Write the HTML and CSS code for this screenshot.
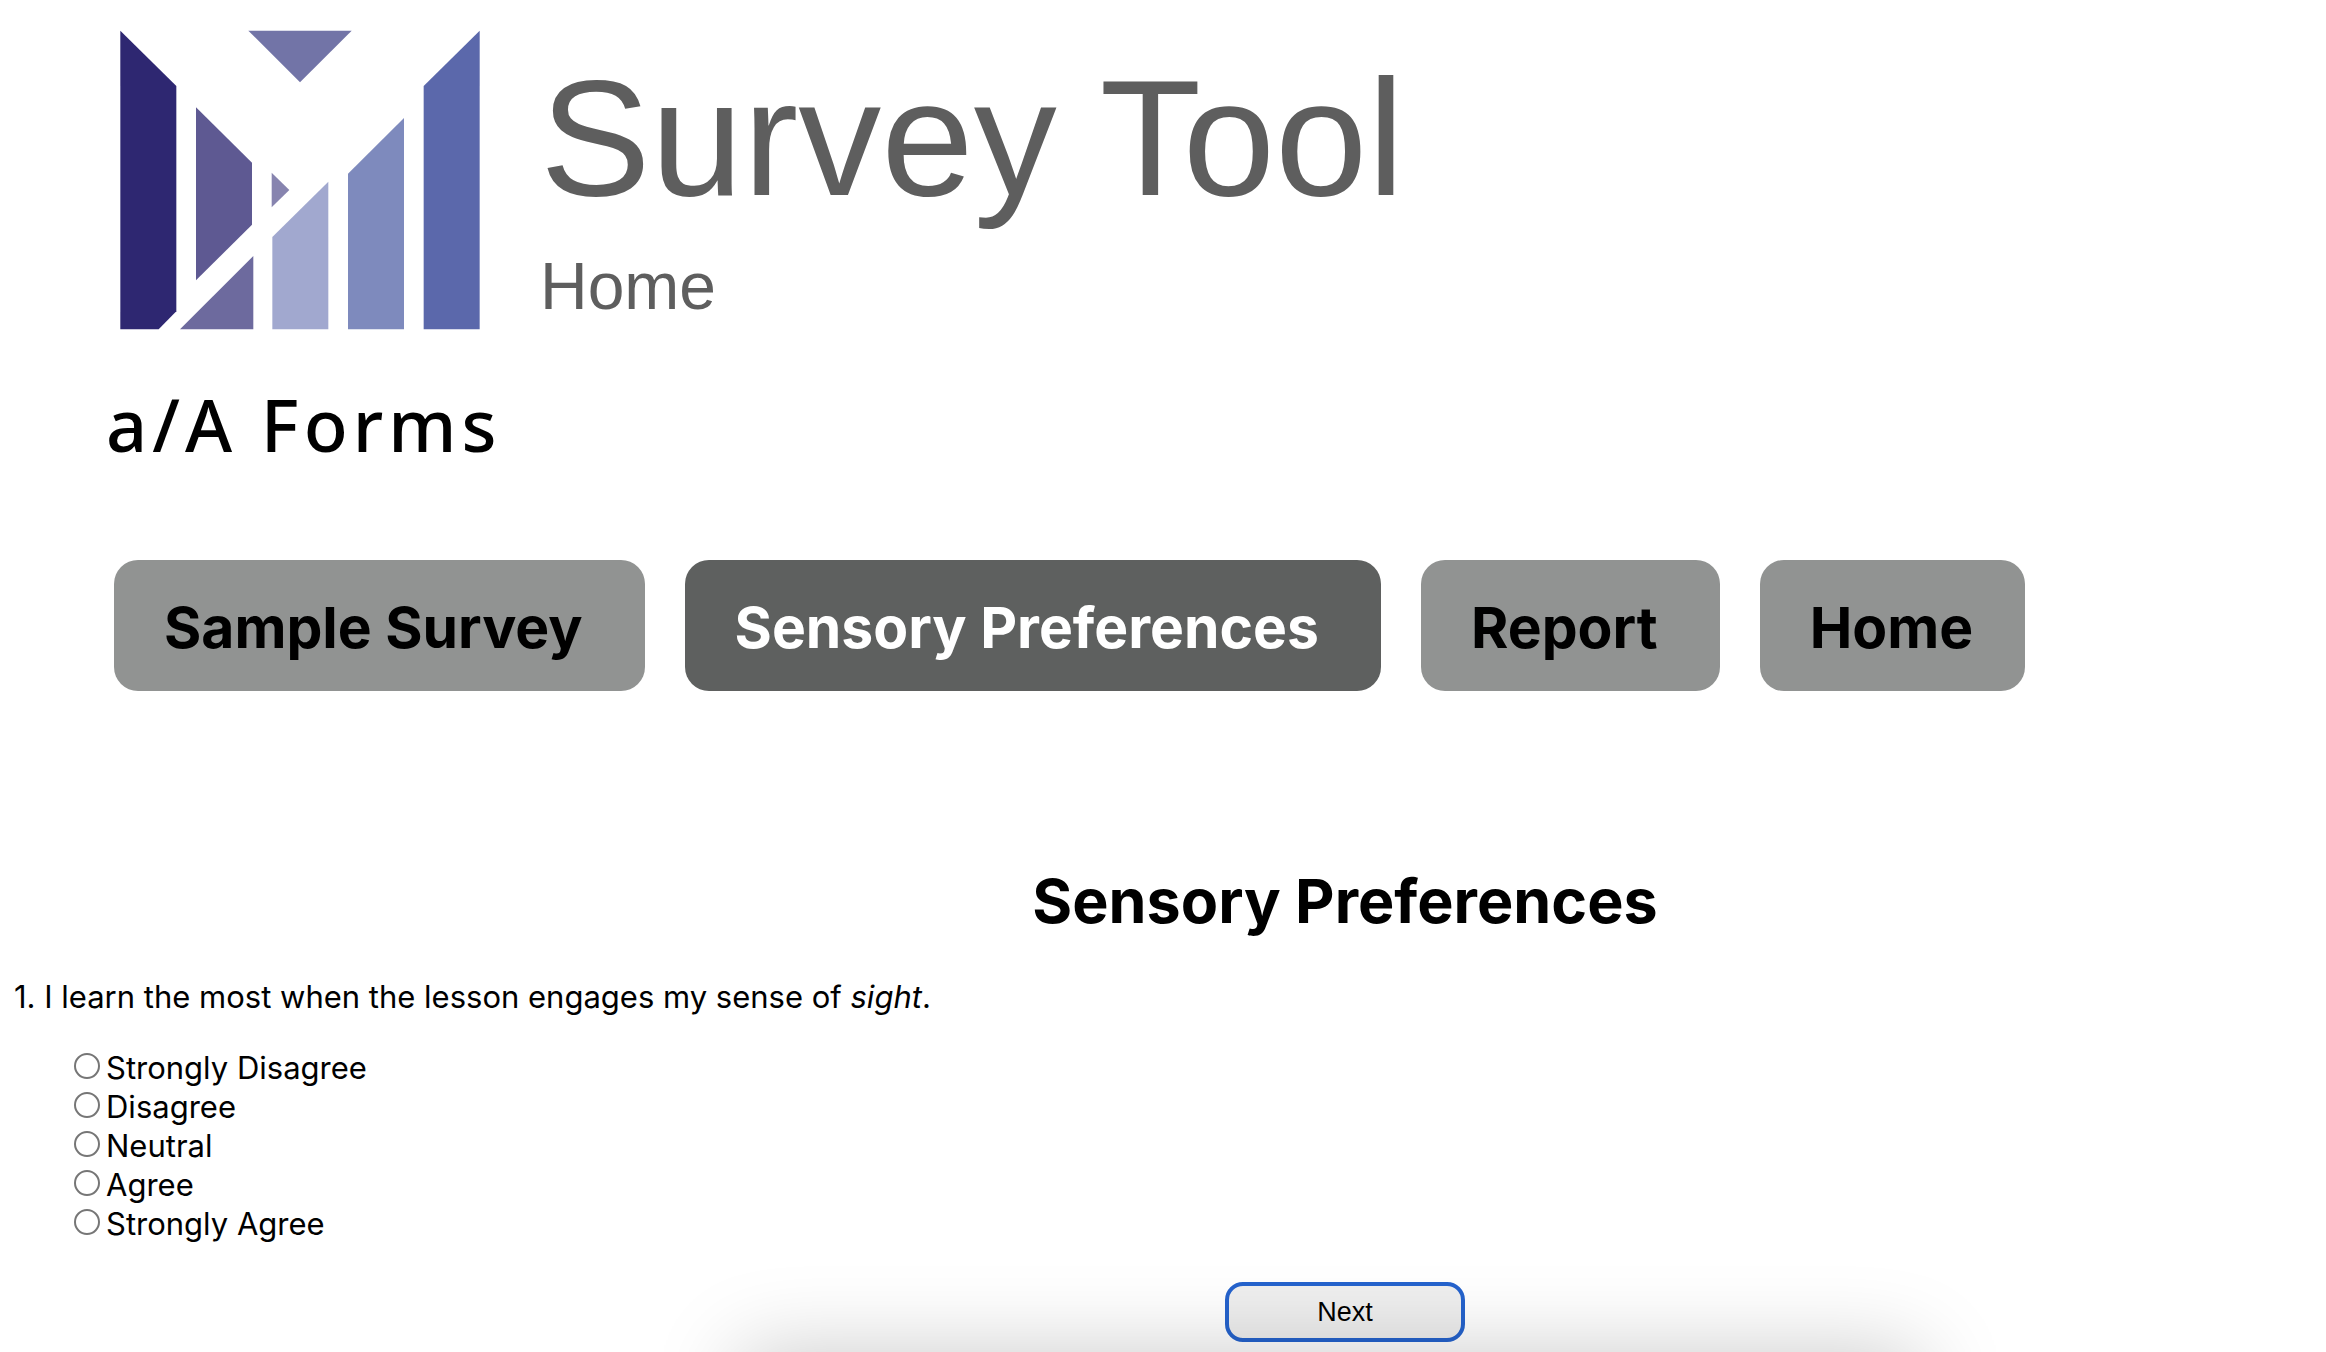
FILE: index.html
```html
<!DOCTYPE html>
<html lang="en">
<head>
<meta charset="utf-8">
<title>Survey Tool</title>
<link rel="stylesheet" href="styles.css">
</head>
<body>
<header class="masthead">
  <div class="brand">
    <svg class="logo" viewBox="90 60 1080 898" role="img" aria-label="a/A Forms logo">
      <path fill="#2e2771" d="M91 61 259 227V903L206 957H91z"/>
      <path fill="#5e5992" d="M318 291 486 457V643L318 810z"/>
      <path fill="#6d6a9e" d="M490 737V957H270z"/>
      <path fill="#7274a7" d="M475 61H785L630 216z"/>
      <path fill="#8784af" d="M545 487 598 539 545 591z"/>
      <path fill="#a1a8cf" d="M547 680 715 514V957H547z"/>
      <path fill="#7e8abd" d="M774 490 942 323V957H774z"/>
      <path fill="#5b68ab" d="M1001 227 1169 61V957H1001z"/>
    </svg>
    <div class="brand-name">a/A Forms</div>
  </div>
  <div class="titles">
    <h1 class="title">Survey Tool</h1>
    <p class="subtitle">Home</p>
  </div>
</header>
<nav class="tabs">
  <a class="tab" href="#sample">Sample Survey</a>
  <a class="tab tab-active" href="#sensory" aria-current="page">Sensory Preferences</a>
  <a class="tab" href="#report">Report</a>
  <a class="tab" href="#home">Home</a>
</nav>
<main>
  <form class="survey">
    <h2 class="survey-title">Sensory Preferences</h2>
    <fieldset class="question">
      <legend class="prompt">1. I learn the most when the lesson engages my sense of <em>sight</em>.</legend>
      <div class="answers">
        <label class="answer"><input class="radio" type="radio" name="q1">Strongly Disagree</label>
        <label class="answer"><input class="radio" type="radio" name="q1">Disagree</label>
        <label class="answer"><input class="radio" type="radio" name="q1">Neutral</label>
        <label class="answer"><input class="radio" type="radio" name="q1">Agree</label>
        <label class="answer"><input class="radio" type="radio" name="q1">Strongly Agree</label>
      </div>
    </fieldset>
    <div class="actions"><button class="next" type="button">Next</button></div>
  </form>
</main>
<div class="dock-shadow"></div>
</body>
</html>
```
FILE: styles.css
```css
* { box-sizing: border-box; }
body {
  margin: 0;
  background: #fff;
  color: #000;
  font: 31px/39px Inter, sans-serif;
  overflow-x: hidden;
}
h1, h2, p { margin: 0; font-weight: 400; }
.masthead {
  display: flex;
  gap: 44px;
  padding: 30px 0 0 106px;
}
.brand { width: 390px; }
.logo { display: block; width: 360px; height: 300px; margin-left: 14px; }
.brand-name {
  margin-top: 44px;
  font: 500 72px/100px "Noto Sans", sans-serif;
  letter-spacing: 5px;
  white-space: nowrap;
}
.titles { font-family: "Liberation Sans", Arial, sans-serif; color: #5e5e5e; }
.title { font-size: 166px; line-height: 216px; }
.subtitle { font-size: 66px; line-height: 80px; }
.tabs { display: flex; gap: 40px; padding: 86px 0 0 114px; }
.tab {
  padding: 28px 62px 24px 50px;
  border-radius: 24px;
  background: #919392;
  color: #000;
  font-size: 57px;
  line-height: 79px;
  font-weight: 700;
  text-decoration: none;
  white-space: nowrap;
}
.tab:last-child { padding-right: 52px; }
.tab-active { background: #5e605f; color: #fff; }
.survey { padding-top: 170px; }
.survey-title {
  margin-left: 364px;
  text-align: center;
  font-size: 61px;
  line-height: 80px;
  font-weight: 700;
}
.question { margin: 0; padding: 0 14px; border: 0; }
.prompt { padding: 36px 0 0; }
.answers { display: flex; flex-direction: column; align-items: flex-start; padding: 32px 0 0 60px; }
.answer { display: flex; align-items: flex-start; gap: 6px; }
.radio {
  appearance: none;
  width: 26px;
  height: 26px;
  margin: 5px 0 0;
  border: 2px solid #767676;
  border-radius: 50%;
  background: #fff;
}
.radio:checked { background: #767676; }
.actions { display: flex; justify-content: center; margin: 39px 0 10px 364px; }
.next {
  width: 240px;
  height: 60px;
  border: 4px solid #2563cd;
  border-radius: 18px;
  background: #efefef;
  color: #000;
  font: 27px/32px "Liberation Sans", Arial, sans-serif;
}
.dock-shadow {
  position: fixed;
  top: 100%;
  left: 740px;
  right: 406px;
  height: 200px;
  box-shadow: 0 0 86px rgba(0, 0, 0, .21);
  pointer-events: none;
}
```
